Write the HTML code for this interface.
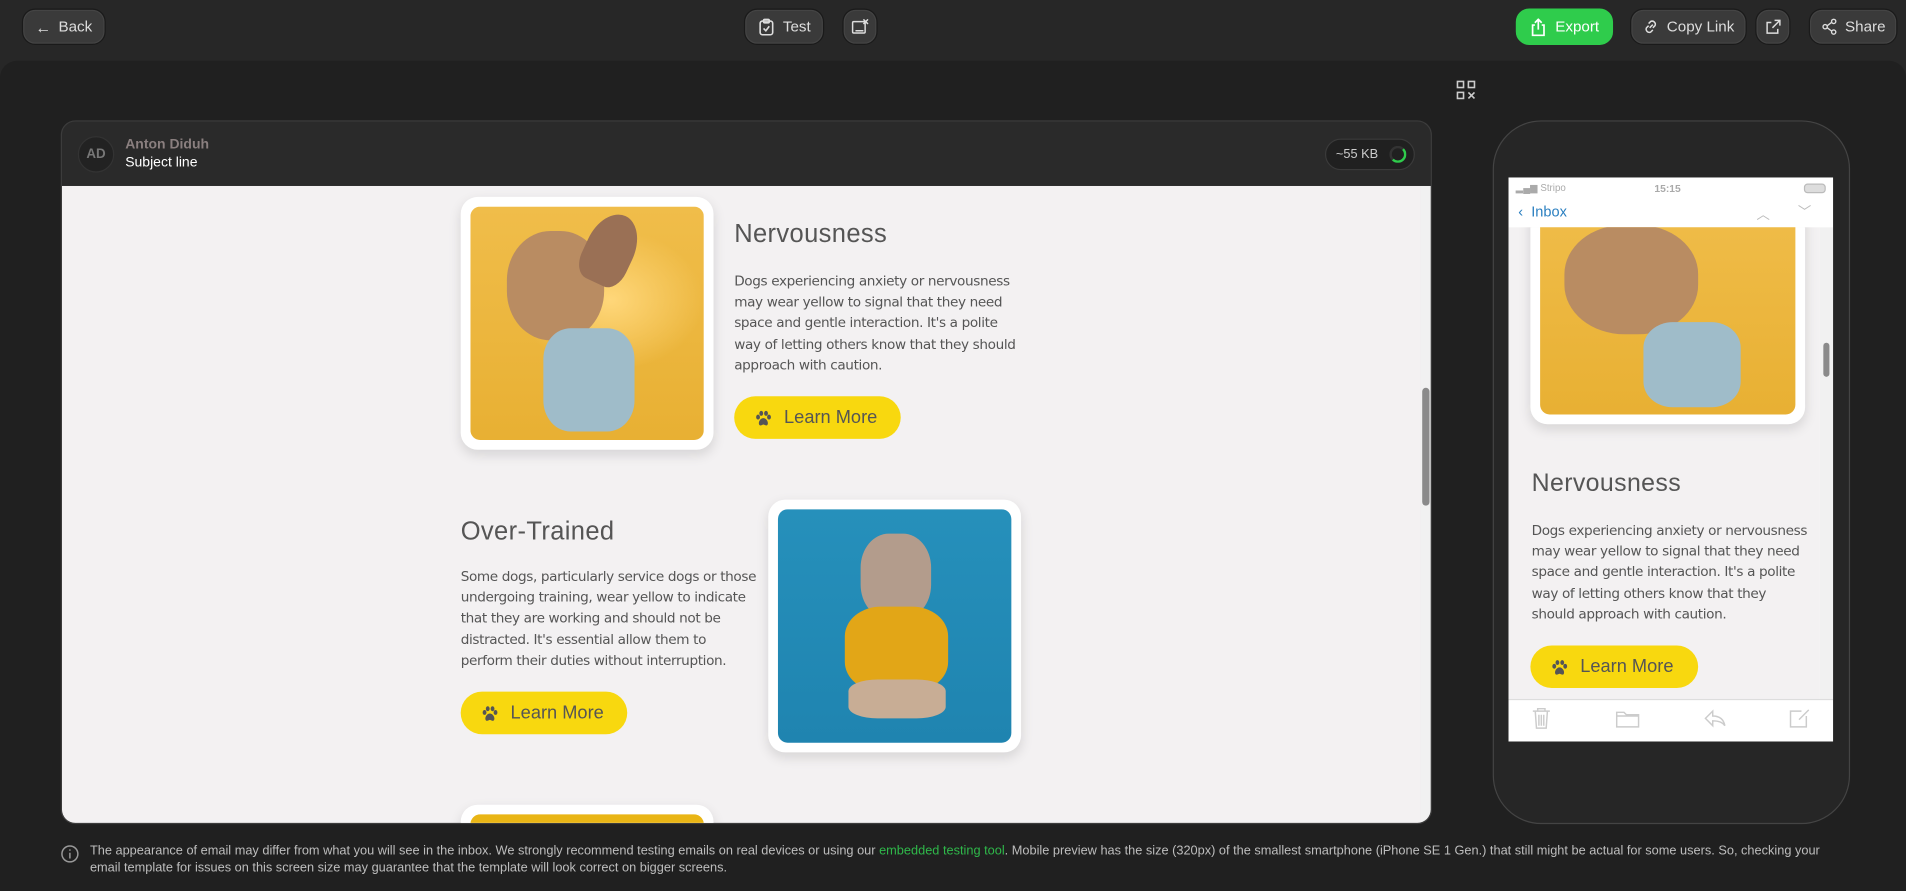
<!DOCTYPE html>
<html><head><meta charset="utf-8"><style>
*{box-sizing:border-box;margin:0;padding:0}
html,body{width:1906px;height:891px;overflow:hidden;background:#272727}
#w{position:absolute;left:0;top:0;width:1568px;height:733px;transform:scale(1.21556);transform-origin:0 0;font-family:"Liberation Sans",sans-serif}
.abs{position:absolute}
.btn{position:absolute;top:7px;height:30px;background:#3a3a3a;border:1px solid #1a1a1a;border-radius:11px;color:#ddd;font-size:12.5px;display:flex;align-items:center;justify-content:center;gap:6px;box-shadow:0 0 0 1px #444 inset}
.main{position:absolute;left:0;top:50px;width:1568px;height:683px;background:#202020;border-radius:14px 14px 0 0}
.frame{position:absolute;left:50px;top:99px;width:1128px;height:579px;border:1px solid #3c3c3c;border-radius:12px;background:#2a2a2a;overflow:hidden}
.content{position:absolute;left:0;top:53px;width:1118px;height:525px;background:#f3f1f2;overflow:hidden}
.card{position:absolute;background:#fff;border-radius:14px;box-shadow:0 4px 10px rgba(0,0,0,.12)}
.img{position:absolute;left:8px;top:8px;right:8px;bottom:8px;border-radius:8px;overflow:hidden}
.t{position:absolute;font-size:21px;color:#555;letter-spacing:.3px}
.p{position:absolute;font-size:11.2px;line-height:17.2px;color:#555;font-family:"DejaVu Sans","Liberation Sans",sans-serif;letter-spacing:-.3px}
.lm{position:absolute;width:137px;height:35px;border-radius:18px;background:#f8d80f;color:#555;font-size:15px;display:flex;align-items:center;padding-left:17px;gap:10px}
.paw{width:14px;height:14px}
.foot{position:absolute;left:74px;top:694px;width:1432px;font-size:10.5px;line-height:13.5px;color:#bdbdbd}
</style></head><body><div id="w">
<div class="btn" style="left:18px;width:69px"><span style="font-size:13px">←</span>Back</div>
<div class="btn" style="left:612px;width:66px"><svg width="15" height="15" viewBox="0 0 16 16" fill="none" stroke="#ddd" stroke-width="1.4"><rect x="2.5" y="2.5" width="11" height="12" rx="2"/><rect x="5.5" y="1" width="5" height="3" rx="1"/><path d="M5.5 9l2 2 3-4"/></svg>Test</div>
<div class="btn" style="left:693px;width:29px"><svg width="15" height="15" viewBox="0 0 16 16" fill="none" stroke="#ddd" stroke-width="1.3"><rect x="1.5" y="3" width="11" height="10" rx="1"/><path d="M4 11h7M11 1l4 4M15 1l-4 4"/></svg></div>
<div class="btn" style="left:1247px;width:80px;background:#2fcc4c;border-color:#2fcc4c;box-shadow:none;color:#fff"><svg width="15" height="15" viewBox="0 0 16 16" fill="none" stroke="#fff" stroke-width="1.5"><path d="M8 10V1M5 4l3-3 3 3M5 6H3v9h10V6h-2"/></svg>Export</div>
<div class="btn" style="left:1341px;width:96px"><svg width="14" height="14" viewBox="0 0 16 16" fill="none" stroke="#ddd" stroke-width="1.4"><path d="M7 9l3-3M6 5l2-2a3 3 0 014 4l-2 2M10 11l-2 2a3 3 0 01-4-4l2-2"/></svg>Copy Link</div>
<div class="btn" style="left:1444px;width:29px"><svg width="14" height="14" viewBox="0 0 16 16" fill="none" stroke="#ddd" stroke-width="1.4"><path d="M9 2h5v5M14 2L7 9M12 10v4H2V4h4"/></svg></div>
<div class="btn" style="left:1488px;width:73px"><svg width="14" height="14" viewBox="0 0 16 16" fill="none" stroke="#ddd" stroke-width="1.3"><circle cx="12" cy="3" r="2"/><circle cx="4" cy="8" r="2"/><circle cx="12" cy="13" r="2"/><path d="M6 7l4-3M6 9l4 3"/></svg>Share</div>
<div class="main"></div>
<svg class="abs" style="left:1198px;top:66px" width="16" height="16" viewBox="0 0 16 16" fill="none" stroke="#ccc" stroke-width="1.3"><rect x="1" y="1" width="5" height="5"/><rect x="10" y="1" width="5" height="5"/><rect x="1" y="10" width="5" height="5"/><path d="M10 10l5 5M15 10l-5 5"/></svg>
<div class="frame">
 <div class="abs" style="left:13px;top:12px;width:30px;height:30px;border-radius:50%;background:#222;border:1px solid #333;color:#777;font-size:11px;font-weight:bold;display:flex;align-items:center;justify-content:center">AD</div>
 <div class="abs" style="left:52px;top:13px;font-size:11.5px;font-weight:bold;color:#8a7f7f">Anton Diduh</div>
 <div class="abs" style="left:52px;top:28px;font-size:11.5px;color:#fff">Subject line</div>
 <div class="abs" style="left:1039px;top:14px;width:74px;height:26px;border-radius:13px;background:#202020;border:1px solid #3a3a3a;color:#ccc;font-size:10.5px;display:flex;align-items:center;padding-left:8px">~55 KB<span style="position:absolute;right:6px;top:5px;width:14px;height:14px;border-radius:50%;border:2px solid #333;border-right-color:#2fcc4c;border-bottom-color:#2fcc4c"></span></div>
 <div class="content">
  <div class="card" style="left:328px;top:9px;width:208px;height:208px"><div class="img" style="background:radial-gradient(ellipse 40% 30% at 60% 40%,#ffd77a,transparent),linear-gradient(#f0bd4a,#e8b033)">
   <div class="abs" style="left:30px;top:20px;width:80px;height:90px;border-radius:45%;background:#b98c62"></div>
   <div class="abs" style="left:95px;top:5px;width:40px;height:60px;border-radius:50% 50% 30% 30%;background:#9a7055;transform:rotate(25deg)"></div>
   <div class="abs" style="left:60px;top:100px;width:75px;height:85px;border-radius:30%;background:#9fbcc9"></div>
  </div></div>
  <div class="t" style="left:553px;top:28px">Nervousness</div>
  <div class="p" style="left:553px;top:70px;width:235px">Dogs experiencing anxiety or nervousness may wear yellow to signal that they need space and gentle interaction. It's a polite way of letting others know that they should approach with caution.</div>
  <div class="lm" style="left:553px;top:173px"><svg class="paw" viewBox="0 0 16 16" fill="#555"><ellipse cx="3" cy="7" rx="1.8" ry="2.3"/><ellipse cx="6" cy="3.5" rx="1.8" ry="2.3"/><ellipse cx="10.5" cy="3.5" rx="1.8" ry="2.3"/><ellipse cx="13.3" cy="7" rx="1.8" ry="2.3"/><path d="M8 8c3 0 5 4 4 6s-3 0-4 0-3 2-4 0 1-6 4-6z"/></svg>Learn More</div>
  <div class="t" style="left:328px;top:273px">Over-Trained</div>
  <div class="p" style="left:328px;top:313px;width:245px">Some dogs, particularly service dogs or those undergoing training, wear yellow to indicate that they are working and should not be distracted. It's essential allow them to perform their duties without interruption.</div>
  <div class="lm" style="left:328px;top:416px"><svg class="paw" viewBox="0 0 16 16" fill="#555"><ellipse cx="3" cy="7" rx="1.8" ry="2.3"/><ellipse cx="6" cy="3.5" rx="1.8" ry="2.3"/><ellipse cx="10.5" cy="3.5" rx="1.8" ry="2.3"/><ellipse cx="13.3" cy="7" rx="1.8" ry="2.3"/><path d="M8 8c3 0 5 4 4 6s-3 0-4 0-3 2-4 0 1-6 4-6z"/></svg>Learn More</div>
  <div class="card" style="left:581px;top:258px;width:208px;height:208px"><div class="img" style="background:linear-gradient(#2690bb,#1f84b0)">
   <div class="abs" style="left:68px;top:20px;width:58px;height:70px;border-radius:40%;background:#b39c8c"></div>
   <div class="abs" style="left:55px;top:80px;width:85px;height:70px;border-radius:35%;background:#e2a617"></div>
   <div class="abs" style="left:58px;top:140px;width:80px;height:32px;border-radius:30%;background:#c8ad95"></div>
  </div></div>
  <div class="card" style="left:328px;top:509px;width:208px;height:60px"><div class="img" style="background:#e9b515"></div></div>
 </div>
 <div class="abs" style="left:1118px;top:53px;width:9px;height:525px;background:#f1f1f1"><div class="abs" style="left:1px;top:166px;width:6px;height:97px;background:#8a8a8a;border-radius:3px"></div></div>
</div>
<div class="abs" style="left:1228px;top:99px;width:294px;height:579px;border:1.5px solid #444;border-radius:40px;background:#262626"></div>
<div class="abs" style="left:1241px;top:146px;width:267px;height:464px;background:#fff;overflow:hidden">
 <div class="abs" style="left:6px;top:4px;font-size:8px;color:#aaa">▂▄▆ Stripo</div>
 <div class="abs" style="left:120px;top:4px;font-size:8.5px;color:#aaa;font-weight:bold">15:15</div>
 <div class="abs" style="left:243px;top:5px;width:18px;height:8px;border:1px solid #bbb;border-radius:3px;background:#ddd"></div>
 <div class="abs" style="left:8px;top:21px;font-size:12px;color:#2a7fc0">‹ &nbsp;Inbox</div>
 <div class="abs" style="left:204px;top:22px;font-size:11px;color:#bbb">︿</div>
 <div class="abs" style="left:238px;top:20px;font-size:11px;color:#bbb">﹀</div>
 <div class="abs" style="left:0;top:41px;width:256px;height:388px;background:#f3f1f2;overflow:hidden">
  <div class="card" style="left:18px;top:-30px;width:226px;height:192px"><div class="img" style="background:linear-gradient(#f0bd4a,#e8b033)">
   <div class="abs" style="left:20px;top:20px;width:110px;height:90px;border-radius:45%;background:#b98c62"></div>
   <div class="abs" style="left:85px;top:100px;width:80px;height:70px;border-radius:30%;background:#9fbcc9"></div>
  </div></div>
  <div class="t" style="left:19px;top:199px;font-size:20.5px">Nervousness</div>
  <div class="p" style="left:19px;top:241px;width:230px">Dogs experiencing anxiety or nervousness may wear yellow to signal that they need space and gentle interaction. It's a polite way of letting others know that they should approach with caution.</div>
  <div class="lm" style="left:18px;top:344px;width:138px"><svg class="paw" viewBox="0 0 16 16" fill="#555"><ellipse cx="3" cy="7" rx="1.8" ry="2.3"/><ellipse cx="6" cy="3.5" rx="1.8" ry="2.3"/><ellipse cx="10.5" cy="3.5" rx="1.8" ry="2.3"/><ellipse cx="13.3" cy="7" rx="1.8" ry="2.3"/><path d="M8 8c3 0 5 4 4 6s-3 0-4 0-3 2-4 0 1-6 4-6z"/></svg>Learn More</div>
 </div>
 <div class="abs" style="left:256px;top:41px;width:11px;height:388px;background:#f1f1f1"><div class="abs" style="left:3px;top:95px;width:5px;height:28px;background:#8a8a8a;border-radius:3px"></div></div>
 <div class="abs" style="left:0;top:429px;width:267px;height:1px;background:#ddd"></div>
 <svg class="abs" style="left:19px;top:436px" width="16" height="18" viewBox="0 0 16 18" fill="none" stroke="#ccc" stroke-width="1.2"><path d="M1 3h14M5 3V1h6v2M3 3l1 14h8l1-14M6 6v9M8 6v9M10 6v9"/></svg>
 <svg class="abs" style="left:88px;top:438px" width="20" height="15" viewBox="0 0 20 15" fill="none" stroke="#ccc" stroke-width="1.2"><path d="M1 2h6l2 2h10v10H1z M1 5h18"/></svg>
 <svg class="abs" style="left:161px;top:437px" width="18" height="16" viewBox="0 0 18 16" fill="none" stroke="#ccc" stroke-width="1.2"><path d="M7 2L1 8l6 6V10c5 0 8 1 10 4-1-5-4-8-10-8z"/></svg>
 <svg class="abs" style="left:231px;top:436px" width="17" height="17" viewBox="0 0 17 17" fill="none" stroke="#ccc" stroke-width="1.2"><path d="M10 3H1v13h13V7M8 10l8-8"/></svg>
</div>
<svg class="abs" style="left:50px;top:695px" width="15" height="15" viewBox="0 0 16 16" fill="none" stroke="#999" stroke-width="1.3"><circle cx="8" cy="8" r="7"/><path d="M8 7v5M8 4v1.2"/></svg>
<div class="foot">The appearance of email may differ from what you will see in the inbox. We strongly recommend testing emails on real devices or using our <span style="color:#2fb84a">embedded testing tool</span>. Mobile preview has the size (320px) of the smallest smartphone (iPhone SE 1 Gen.) that still might be actual for some users. So, checking your email template for issues on this screen size may guarantee that the template will look correct on bigger screens.</div>
</div></body></html>
